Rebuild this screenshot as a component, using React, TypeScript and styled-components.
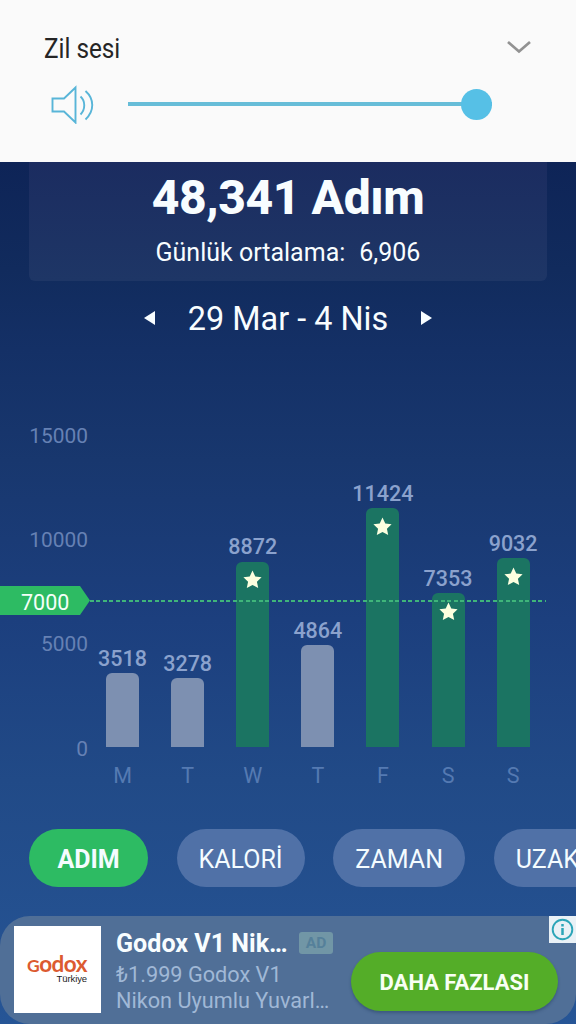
import React, { FC } from 'react';
import styled, { createGlobalStyle } from 'styled-components';

const STEP_HEIGHT = 104.2;
const STEP_VALUE = 5000;

const toPixels = (value: number) => (value / STEP_VALUE) * STEP_HEIGHT;

const GOAL = 7000;
const TICKS = [15000, 10000, 5000, 0];

const DAYS = [
  { day: 'M', steps: 3518 },
  { day: 'T', steps: 3278 },
  { day: 'W', steps: 8872 },
  { day: 'T', steps: 4864 },
  { day: 'F', steps: 11424 },
  { day: 'S', steps: 7353 },
  { day: 'S', steps: 9032 },
];

const TABS = [
  { label: 'ADIM', width: 119, active: true },
  { label: 'KALORİ', width: 128 },
  { label: 'ZAMAN', width: 132 },
  { label: 'UZAKLIK', width: 143 },
];

const GlobalStyle = createGlobalStyle`
  * {
    box-sizing: border-box;
  }

  body {
    margin: 0;
    font-family: Roboto, 'Liberation Sans', sans-serif;
  }

  button {
    border: 0;
    font-family: inherit;
    margin: 0;
    padding: 0;
  }
`;

const Screen = styled.div`
  background: linear-gradient(
    #0e2457 162px,
    #112b5d 270px,
    #143066 350px,
    #18376e 460px,
    #1c3f7e 620px,
    #214a87 780px,
    #265596 1024px
  );
  display: flex;
  flex-direction: column;
  height: 1024px;
  overflow: hidden;
  width: 576px;
`;

const VolumePanel = styled.header`
  background: #fafafa;
  display: flex;
  flex: 0 0 162px;
  flex-direction: column;
  padding: 32px 44px 0 43px;
`;

const VolumeTop = styled.div`
  align-items: center;
  display: flex;
  height: 32px;
  justify-content: space-between;
`;

const VolumeTitle = styled.h2`
  color: #252525;
  font-size: 27px;
  font-weight: 400;
  line-height: 32px;
  margin: 2px 0 0 1px;
  transform: scaleX(0.9);
  transform-origin: left;
`;

const VolumeRow = styled.div`
  align-items: center;
  display: flex;
  height: 40px;
  margin-top: 20px;
  padding-left: 8px;
`;

const Track = styled.div`
  align-items: center;
  background: #67bdd8;
  display: flex;
  height: 4px;
  justify-content: flex-end;
  margin-left: 33px;
  width: 364px;
`;

const Knob = styled.div`
  background: #56c0e6;
  border-radius: 50%;
  flex: none;
  height: 31px;
  width: 31px;
`;

const Summary = styled.section`
  align-items: center;
  background: linear-gradient(#1b2c60, #1e3666);
  border-radius: 0 0 6px 6px;
  color: #f8fdff;
  display: flex;
  flex: 0 0 119px;
  flex-direction: column;
  margin: 0 29px;
`;

const Total = styled.h1`
  font-size: 48px;
  font-weight: 800;
  letter-spacing: -0.4px;
  line-height: 56px;
  margin: 8px 0 0;
`;

const Average = styled.p`
  display: flex;
  font-size: 25px;
  gap: 14px;
  line-height: 30px;
  margin: 12px 0 0;
`;

const Period = styled.nav`
  align-items: center;
  color: #f8fdff;
  display: flex;
  flex: 0 0 40px;
  font-size: 32.4px;
  justify-content: center;
  margin-top: 17px;
`;

const PeriodLabel = styled.span`
  line-height: 38px;
  padding-top: 2px;
  text-align: center;
  width: 266px;
`;

const Chart = styled.section`
  display: flex;
  flex: 0 0 381px;
  margin-top: 86px;
  min-height: 0;
  position: relative;
`;

const Axis = styled.div`
  color: #6681b4;
  display: flex;
  flex: 0 0 88px;
  flex-direction: column;
  font-size: 20.9px;
  text-align: right;
`;

const Tick = styled.span`
  flex: none;
  height: ${STEP_HEIGHT}px;
  line-height: 24px;

  &:last-child {
    height: 24px;
  }
`;

const Plot = styled.div`
  display: grid;
  grid-template-columns: repeat(7, 65.1px);
  margin-left: 2px;
`;

const Day = styled.div`
  align-items: center;
  display: flex;
  flex-direction: column;
  height: 364px;
  justify-content: flex-end;
`;

const DayValue = styled.span`
  color: #8ba2cd;
  font-size: 21.5px;
  font-weight: 500;
  line-height: 22px;
  margin-bottom: 3.5px;
`;

const Bar = styled.div<{ $reached: boolean }>`
  background: ${({ $reached }) => ($reached ? '#1b7462' : '#7d90b1')};
  border-radius: 6px 6px 0 0;
  display: flex;
  flex: none;
  justify-content: center;
  padding-top: 8.5px;
  width: 33px;
`;

const DayName = styled.span`
  color: #557ab2;
  font-size: 21.5px;
  line-height: 24px;
  margin-top: 17.5px;
`;

const Goal = styled.div`
  align-items: center;
  display: flex;
  height: 29px;
  left: 0;
  position: absolute;
  width: 546px;
`;

const GoalTag = styled.span`
  background: #2dbb63;
  clip-path: polygon(0 0, 80px 0, 100% 50%, 80px 100%, 0 100%);
  color: #f4fff8;
  font-size: 21.5px;
  height: 29px;
  line-height: 33px;
  padding-left: 21px;
  width: 90px;
`;

const GoalLine = styled.span`
  background: repeating-linear-gradient(
    to right,
    #3fb57a 0 4px,
    transparent 4px 6.5px
  );
  flex: 1;
  height: 2px;
`;

const Tabs = styled.nav`
  display: flex;
  flex: 0 0 58px;
  gap: 28.6px;
  margin-top: 24px;
  overflow: hidden;
  padding-left: 29px;
`;

const Tab = styled.button<{ $active?: boolean; $width: number }>`
  background: ${({ $active }) => ($active ? '#2dbb63' : '#5071a7')};
  border-radius: 29px;
  color: #f4fcff;
  flex: 0 0 ${({ $width }) => $width}px;
  font-size: 25px;
  font-weight: ${({ $active }) => ($active ? 700 : 400)};
  height: 58px;
  padding-top: 2px;
`;

const Ad = styled.aside`
  background: #506f97;
  border-radius: 30px;
  display: flex;
  flex: 0 0 108px;
  margin-top: 29px;
  position: relative;
`;

const AdLogo = styled.div`
  align-items: flex-end;
  background: #fff;
  display: flex;
  flex: 0 0 87px;
  flex-direction: column;
  height: 87px;
  margin: 10px 0 0 14px;
  padding: 27px 14px 0 0;
`;

const Brand = styled.span`
  color: #dc5a30;
  font-family: Lato, sans-serif;
  font-size: 22.5px;
  font-weight: 700;
  letter-spacing: -0.5px;
  line-height: 22px;
`;

const BrandInitial = styled.span`
  font-size: 17.5px;
`;

const Country = styled.span`
  color: #222;
  font-family: 'Liberation Sans', Arial, sans-serif;
  font-size: 9.5px;
  letter-spacing: -0.1px;
  line-height: 10px;
  margin-top: -3px;
`;

const AdBody = styled.div`
  padding: 13px 0 0 15px;
  width: 240px;
`;

const AdHeading = styled.div`
  align-items: center;
  display: flex;
  gap: 10px;
`;

const AdTitle = styled.strong`
  color: #f8fdff;
  font-size: 25.1px;
  line-height: 29px;
  white-space: nowrap;
  width: 173px;
`;

const AdBadge = styled.span`
  background: #7196a6;
  border-radius: 3px;
  color: #55809a;
  font-size: 15.5px;
  font-weight: 700;
  height: 22px;
  line-height: 23px;
  margin-bottom: 2px;
  text-align: center;
  width: 34px;
`;

const AdText = styled.p`
  color: #a0b8d6;
  font-size: 21.7px;
  line-height: 25.7px;
  margin: 4px 0 0;
  white-space: nowrap;
`;

const AdButton = styled.button`
  background: #54ad28;
  border-radius: 30px;
  box-shadow: 0 2px 3px rgba(20, 50, 80, 0.35);
  color: #f8fff4;
  font-size: 22px;
  font-weight: 700;
  height: 59px;
  margin: 36px 0 0 10px;
  padding-top: 2px;
  width: 207px;
`;

const AdInfo = styled.div`
  background: #e9f1f6;
  display: flex;
  height: 27px;
  padding: 0 0 0 1px;
  position: absolute;
  right: 0;
  top: 0;
  width: 27px;
`;

const SpeakerIcon: FC = () => (
  <svg width="44" height="40" viewBox="0 0 44 40" fill="none" stroke="#58b5d8" strokeWidth="1.9">
    <path d="M1.5 14.5H13L24.5 3.5V38.5L13 27.500H1.5Z" />
    <path d="M29.5 12.5C34.5 17 34.5 25.5 29.5 30.5M34.5 7C43.5 15 43.5 27 34.5 35.5" />
  </svg>
);

const ChevronIcon: FC = () => (
  <svg width="26" height="16" viewBox="0 0 26 16" fill="none" stroke="#929292" strokeWidth="2.7">
    <path d="M2 2L13 11.5L24 2" />
  </svg>
);

const StarIcon: FC = () => (
  <svg width="19" height="19" viewBox="0 0 24 24" fill="#fcffdf">
    <path d="M12 .7L15.5 8.3L23.5 9.2L17.6 14.8L19.2 22.8L12 18.8L4.8 22.8L6.4 14.8L.5 9.2L8.5 8.3Z" />
  </svg>
);

const ArrowIcon: FC<{ next?: boolean }> = ({ next }) => (
  <svg width="11" height="15" viewBox="0 0 11 15" fill="#f8fdff">
    <path d={next ? 'M0 0L11 7L0 14Z' : 'M11 0L0 7L11 14Z'} />
  </svg>
);

const InfoIcon: FC = () => (
  <svg width="26" height="27" viewBox="0 0 26 27" fill="none" stroke="#2ca5b8">
    <circle cx="12.5" cy="13.5" r="9.8" strokeWidth="1.9" />
    <path d="M12.5 12V19M12.5 8V10.5" strokeWidth="2.5" />
  </svg>
);

/** System volume overlay that covers the top of the app. */
const Volume: FC = () => (
  <VolumePanel>
    <VolumeTop>
      <VolumeTitle>Zil sesi</VolumeTitle>
      <ChevronIcon />
    </VolumeTop>

    <VolumeRow>
      <SpeakerIcon />
      <Track>
        <Knob />
      </Track>
    </VolumeRow>
  </VolumePanel>
);

/** Steps per day, with the daily goal drawn across the bars. */
const StepsChart: FC = () => (
  <Chart>
    <Axis>
      {TICKS.map((tick) => (
        <Tick key={tick}>{tick}</Tick>
      ))}
    </Axis>

    <Plot>
      {DAYS.map(({ day, steps }, index) => (
        <Day key={index}>
          <DayValue>{steps}</DayValue>
          <Bar $reached={steps >= GOAL} style={{ height: toPixels(steps) }}>
            {steps >= GOAL && <StarIcon />}
          </Bar>
          <DayName>{day}</DayName>
        </Day>
      ))}
    </Plot>

    <Goal style={{ top: 308 - toPixels(GOAL) }}>
      <GoalTag>{GOAL}</GoalTag>
      <GoalLine />
    </Goal>
  </Chart>
);

const AdBanner: FC = () => (
  <Ad>
    <AdLogo>
      <Brand>
        <BrandInitial>G</BrandInitial>odox
      </Brand>
      <Country>Türkiye</Country>
    </AdLogo>

    <AdBody>
      <AdHeading>
        <AdTitle>Godox V1 Nik…</AdTitle>
        <AdBadge>AD</AdBadge>
      </AdHeading>
      <AdText>
        ₺1.999 Godox V1
        <br />
        Nikon Uyumlu Yuvarl…
      </AdText>
    </AdBody>

    <AdButton>DAHA FAZLASI</AdButton>

    <AdInfo>
      <InfoIcon />
    </AdInfo>
  </Ad>
);

const App: FC = () => (
  <Screen>
    <GlobalStyle />
    <Volume />

    <Summary>
      <Total>48,341 Adım</Total>
      <Average>
        <span>Günlük ortalama:</span>
        <span>6,906</span>
      </Average>
    </Summary>

    <Period>
      <ArrowIcon />
      <PeriodLabel>29 Mar - 4 Nis</PeriodLabel>
      <ArrowIcon next />
    </Period>

    <StepsChart />

    <Tabs>
      {TABS.map(({ label, width, active }) => (
        <Tab key={label} $active={active} $width={width}>
          {label}
        </Tab>
      ))}
    </Tabs>

    <AdBanner />
  </Screen>
);

export default App;
